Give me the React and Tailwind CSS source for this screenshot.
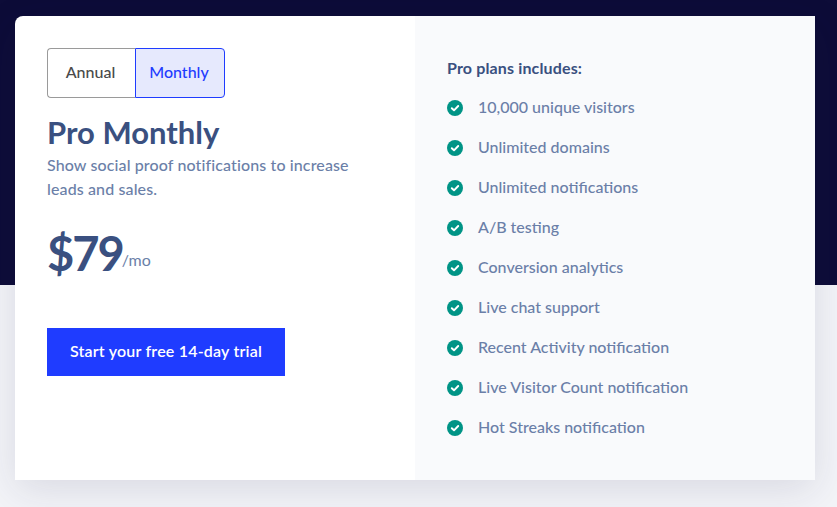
import React from "react";

const features = [
  "10,000 unique visitors",
  "Unlimited domains",
  "Unlimited notifications",
  "A/B testing",
  "Conversion analytics",
  "Live chat support",
  "Recent Activity notification",
  "Live Visitor Count notification",
  "Hot Streaks notification",
];

function Check() {
  return (
    <svg width="16" height="16" viewBox="0 0 16 16" className="shrink-0">
      <circle cx="8" cy="8" r="8" fill="#009486" />
      <path d="M4.8 8.2 L7 10.3 L11.2 6" fill="none" stroke="#fff" strokeWidth="1.9" strokeLinecap="round" strokeLinejoin="round" />
    </svg>
  );
}

export default function App() {
  return (
    <div className="h-[507px] w-[837px] overflow-hidden pt-4 pl-[15px] bg-[linear-gradient(to_bottom,#0d0c38_0,#0d0c38_285px,#f3f4f8_285px,#f3f4f8_100%)] font-['Lato','Noto_Sans',sans-serif]">
      <div className="flex h-[464px] w-[800px] overflow-hidden rounded-tl-lg shadow-[0_10px_40px_rgba(30,35,70,0.12)]">
        <div className="w-[400px] bg-white pl-8 pt-8">
          <div className="flex h-[50px] w-[178px] text-[16px] font-medium">
            <div className="flex w-[88px] items-center justify-center rounded-l border border-r-0 border-[#9a9a9a] pr-0.5 pb-0.5 text-[#4a4a4a]">Annual</div>
            <div className="flex w-[90px] items-center justify-center rounded-r border border-[#1f3cff] bg-[#e6e9fd] pr-0.5 pb-0.5 text-[#1f3cff]">Monthly</div>
          </div>
          <h1 className="mt-[14px] text-[31px] leading-[40px] font-bold text-[#3a5080]">Pro Monthly</h1>
          <p className="mt-px w-[320px] text-[16px] leading-6 font-medium tracking-[0.12px] text-[#6b7fa8]">Show social proof notifications to increase leads and sales.</p>
          <div className="mt-[20px] flex items-end">
            <span className="text-[47px] leading-[64px] font-bold tracking-[-2px] text-[#3a5080]">$79</span>
            <span className="mb-[13px] -ml-px text-[16px] leading-6 text-[#6b7fa8]">/mo</span>
          </div>
          <button className="mt-[43px] h-12 w-[238px] bg-[#1f3cff] pb-0.5 text-[16px] font-semibold tracking-[0.2px] text-white">Start your free 14-day trial</button>
        </div>
        <div className="w-[400px] bg-[#f9fafc] pl-8 pt-[40px]">
          <h2 className="text-[16px] leading-6 font-bold tracking-[0.15px] text-[#3a5080]">Pro plans includes:</h2>
          <ul className="mt-[8px] flex flex-col">
            {features.map((f) => (
              <li key={f} className="flex h-10 items-center gap-4 text-[16px] font-medium text-[#6b7fa8]">
                <Check />
                <span className="-ml-px -mt-0.5">{f}</span>
              </li>
            ))}
          </ul>
        </div>
      </div>
    </div>
  );
}
